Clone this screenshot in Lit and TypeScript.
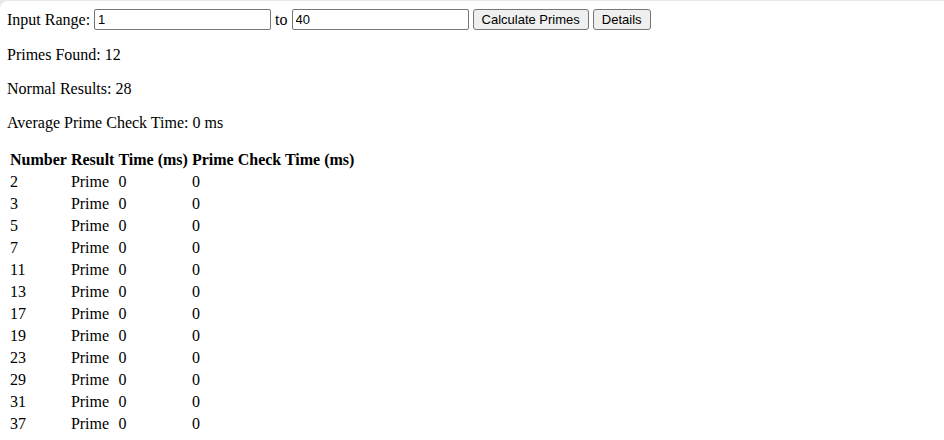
import { LitElement, html, css } from "lit";
import { customElement, state } from "lit/decorators.js";

interface Row { value: number; time: number; check: number; }

@customElement("app-root")
export class AppRoot extends LitElement {
  static styles = css`
    :host { display: block; background: #e8e8e8; color: #000; font: 16px "Liberation Serif", "Times New Roman", serif; }
    .page { box-sizing: border-box; min-height: 100vh; padding: 8px 7px 0; border-top: 1px solid #e8e8e8; border-top-left-radius: 8px; background: #fff; }
    .range { display: flex; align-items: center; gap: 4px; line-height: 18px; }
    .box { box-sizing: border-box; width: 177px; height: 21px; margin: 0; padding: 1px 3px; border: 1px solid #767676; border-radius: 2px; background: #fff; color: #000; font: 13px "Liberation Sans", Arial, sans-serif; }
    .btn { box-sizing: border-box; height: 21px; margin: 0; padding: 0 8px; border: 1px solid #767676; border-radius: 3px; background: #efefef; color: #000; font: 13px "Liberation Sans", Arial, sans-serif; }
    .stat { margin: 16px 0; line-height: 18px; }
    .results { border-collapse: separate; border-spacing: 2px; line-height: 18px; }
    .results th { padding: 1px; text-align: center; white-space: nowrap; }
    .results td { padding: 1px; }
  `;

  @state() private from = "1";
  @state() private to = "40";
  @state() private rows: Row[] = [2, 3, 5, 7, 11, 13, 17, 19, 23, 29, 31, 37].map((value) => ({ value, time: 0, check: 0 }));

  render() {
    return html`
      <main class="page">
        <div class="range">
          <label for="from">Input Range:</label>
          <input class="box" id="from" type="text" .value=${this.from} />
          <label for="to">to</label>
          <input class="box" id="to" type="text" .value=${this.to} />
          <button class="btn" type="button">Calculate Primes</button>
          <button class="btn" type="button">Details</button>
        </div>
        <p class="stat">Primes Found: ${this.rows.length}</p>
        <p class="stat">Normal Results: 28</p>
        <p class="stat">Average Prime Check Time: 0 ms</p>
        <table class="results">
          <thead>
            <tr><th>Number</th><th>Result</th><th>Time (ms)</th><th>Prime Check Time (ms)</th></tr>
          </thead>
          <tbody>
            ${this.rows.map((r) => html`<tr><td>${r.value}</td><td>Prime</td><td>${r.time}</td><td>${r.check}</td></tr>`)}
          </tbody>
        </table>
      </main>
    `;
  }
}
